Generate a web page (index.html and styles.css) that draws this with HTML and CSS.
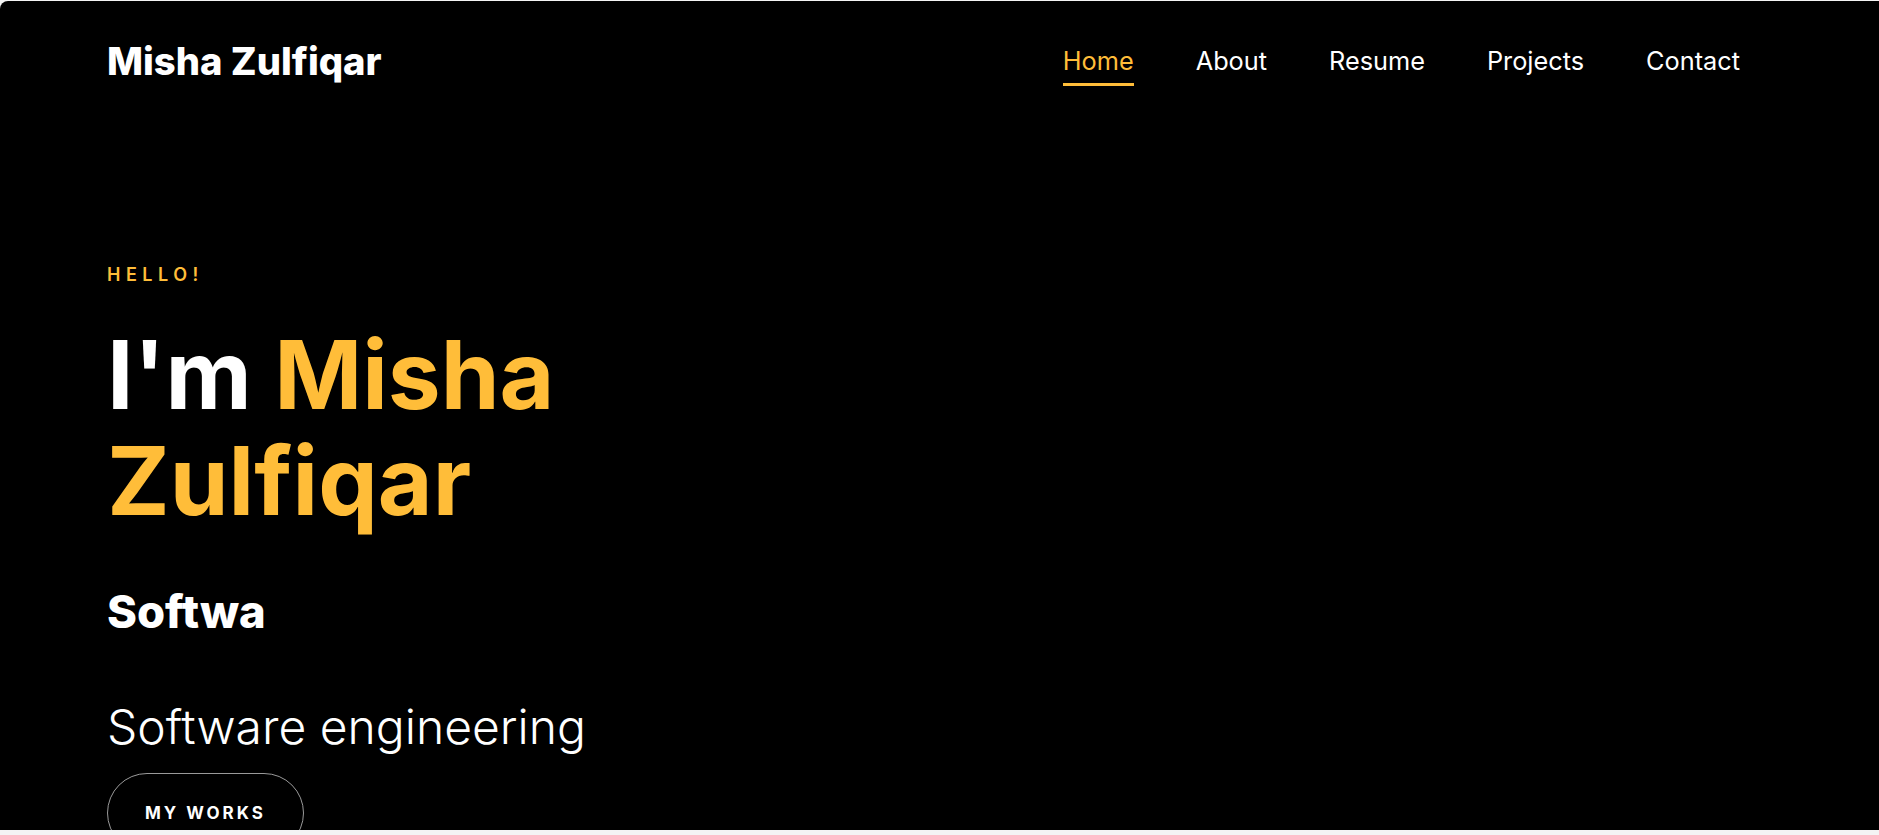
FILE: index.html
```html
<!DOCTYPE html>
<html lang="en">
<head>
<meta charset="utf-8">
<title>Misha Zulfiqar</title>
<link rel="stylesheet" href="styles.css">
</head>
<body>
<div class="page">
  <header class="topbar">
    <a class="brand" href="#">Misha Zulfiqar</a>
    <nav>
      <ul class="menu">
        <li><a class="menu-link active" href="#">Home</a></li>
        <li><a class="menu-link" href="#">About</a></li>
        <li><a class="menu-link" href="#">Resume</a></li>
        <li><a class="menu-link" href="#">Projects</a></li>
        <li><a class="menu-link" href="#">Contact</a></li>
      </ul>
    </nav>
  </header>
  <section class="hero">
    <span class="hello">Hello!</span>
    <h1 class="title">I'm <span class="accent">Misha</span><br><span class="accent">Zulfiqar</span></h1>
    <h2 class="typed">Softwa</h2>
    <p class="role">Software engineering</p>
    <a class="works" href="#">My works</a>
  </section>
</div>
</body>
</html>
```
FILE: styles.css
```css
* { box-sizing: border-box; margin: 0; padding: 0; }
html, body { height: 100%; }
body {
  background: #f4f4f4;
  font-family: Inter, "Noto Sans", sans-serif;
  overflow: hidden;
}
a { text-decoration: none; color: inherit; }
ul { list-style: none; }
.page {
  background: #000;
  color: #fff;
  height: 829px;
  margin-top: 1px;
  border-top-left-radius: 8px;
  overflow: hidden;
}
.topbar {
  display: flex;
  justify-content: space-between;
  align-items: center;
  height: 120px;
  padding: 0 108px 0 107px;
}
.brand {
  font-size: 38.2px;
  font-weight: 800;
  line-height: 44px;
}
.menu { display: flex; }
.menu-link {
  position: relative;
  display: block;
  padding: 0 31px;
  font-size: 25.3px;
  line-height: 28px;
  font-weight: 400;
}
.menu-link.active { color: #ffbd39; }
.menu-link.active::after {
  content: "";
  position: absolute;
  left: 31px;
  right: 31px;
  top: 36px;
  height: 3px;
  background: #ffbd39;
}
.hero {
  display: flex;
  flex-direction: column;
  align-items: flex-start;
  padding: 144px 0 0 107px;
}
.hello {
  font-size: 18px;
  line-height: 20px;
  font-weight: 600;
  letter-spacing: 5.5px;
  text-transform: uppercase;
  color: #ffbd39;
}
.title {
  margin-top: 37px;
  font-size: 94.5px;
  line-height: 106px;
  font-weight: 700;
}
.accent { color: #ffbd39; }
.typed {
  margin-top: 48px;
  font-size: 45.4px;
  line-height: 60px;
  font-weight: 800;
}
.role {
  margin-top: 55px;
  font-size: 48px;
  line-height: 60px;
  font-weight: 300;
}
.works {
  margin-top: 16px;
  display: block;
  padding: 28px 37px;
  border: 1px solid #9a9a9a;
  border-radius: 40px;
  font-size: 17px;
  line-height: 22px;
  font-weight: 700;
  letter-spacing: 3px;
  text-transform: uppercase;
}
```
